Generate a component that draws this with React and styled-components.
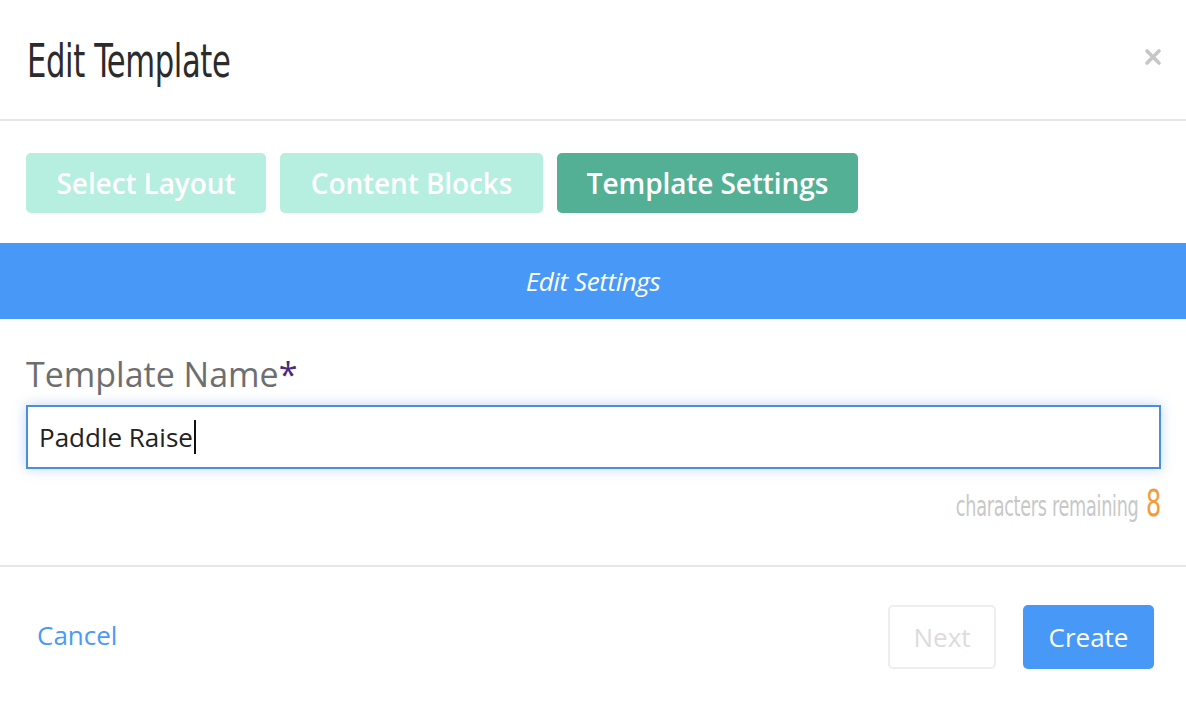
import React from 'react';
import styled, { createGlobalStyle } from 'styled-components';

const GlobalStyle = createGlobalStyle`
	body {
		margin: 0;
		background: #fff;
		font-family: "Open Sans", "Liberation Sans", sans-serif;
	}
`;

const tabs = [
	{ name: 'Select Layout', width: 240, active: false },
	{ name: 'Content Blocks', width: 263, active: false },
	{ name: 'Template Settings', width: 301, active: true },
];

const App = () => {
	return (
		<Modal>
			<GlobalStyle />
			<Header>
				<Title>Edit Template</Title>
				<Close aria-label="close">
					<svg width="18" height="18" viewBox="0 0 18 18">
						<path d="M3 3 L15 15 M15 3 L3 15" stroke="#c6c6c6" strokeWidth="3.6" strokeLinecap="round" />
					</svg>
				</Close>
			</Header>

			<Tabs>
				{tabs.map((t) => (
					<Tab key={t.name} active={t.active} style={{ width: t.width }}>
						{t.name}
					</Tab>
				))}
			</Tabs>

			<Band>Edit Settings</Band>

			<Body>
				<Label>
					Template Name<span>*</span>
				</Label>
				<InputBox>
					Paddle Raise<Caret />
				</InputBox>
				<Remaining>
					<Narrow>
						characters remaining <b>8</b>
					</Narrow>
				</Remaining>
			</Body>

			<Footer>
				<Cancel>Cancel</Cancel>
				<Actions>
					<NextButton>Next</NextButton>
					<CreateButton>Create</CreateButton>
				</Actions>
			</Footer>
		</Modal>
	);
};

const Modal = styled.div`
	width: 1186px;
	height: 706px;
	background: #fff;
	overflow: hidden;
`;

const Header = styled.div`
	height: 121px;
	border-bottom: 2px solid #e6e6e6;
	display: flex;
	align-items: center;
	justify-content: space-between;
	padding: 0 24px 0 27px;
	box-sizing: border-box;
`;

const Title = styled.h1`
	margin: 2px 0 0;
	font-family: "Liberation Sans Narrow", "DejaVu Sans Condensed", "Liberation Sans", sans-serif;
	font-weight: 400;
	font-size: 46px;
	letter-spacing: -0.5px;
	color: #2b2b2b;
	transform: scaleX(0.74);
	transform-origin: left center;
`;

const Close = styled.div`
	display: flex;
	align-items: center;
	margin-top: -6px;
`;

const Tabs = styled.div`
	display: flex;
	gap: 14px;
	padding: 32px 26px 30px;
`;

const Tab = styled.div`
	height: 60px;
	border-radius: 5px;
	background: ${({ active }) => (active ? '#54b095' : '#b6eee0')};
	color: #fff;
	font-weight: 600;
	font-size: 28px;
	display: flex;
	align-items: center;
	justify-content: center;
	box-sizing: border-box;
	letter-spacing: -0.1px;
`;

const Band = styled.div`
	height: 76px;
	background: #4899f7;
	color: #fff;
	font-style: italic;
	font-size: 26px;
	display: flex;
	align-items: center;
	justify-content: center;
	letter-spacing: -0.4px;
`;

const Body = styled.div`
	padding: 33px 25px 0 26px;
	height: 248px;
	box-sizing: border-box;
	border-bottom: 2px solid #e6e6e6;
`;

const Label = styled.div`
	font-size: 34px;
	color: #6e6e6e;
	line-height: 44px;
	margin-bottom: 9px;
	span {
		color: #4b2a7b;
	}
`;

const InputBox = styled.div`
	height: 64px;
	border: 2px solid #4a90d9;
	box-sizing: border-box;
	box-shadow: 0 0 12px rgba(74, 144, 217, 0.35);
	display: flex;
	align-items: center;
	padding-left: 11px;
	font-size: 26px;
	color: #222;
`;

const Caret = styled.span`
	display: inline-block;
	width: 2px;
	height: 34px;
	background: #111;
	margin-left: 1px;
`;

const Remaining = styled.div`
	margin-top: 12px;
	display: flex;
	justify-content: flex-end;
`;

const Narrow = styled.span`
	display: inline-block;
	font-family: "Liberation Sans Narrow", "DejaVu Sans Condensed", "Liberation Sans", sans-serif;
	font-size: 28px;
	color: #c8c8c8;
	letter-spacing: -0.4px;
	transform: scaleX(0.7);
	transform-origin: right center;
	white-space: nowrap;
	b {
		font-weight: 400;
		font-size: 38px;
		color: #f39c3c;
		margin-left: 3px;
	}
`;

const Footer = styled.div`
	display: flex;
	align-items: center;
	justify-content: space-between;
	padding: 38px 32px 0 37px;
`;

const Cancel = styled.div`
	color: #4a9af7;
	font-size: 26px;
	margin-top: -4px;
`;

const Actions = styled.div`
	display: flex;
	gap: 27px;
`;

const NextButton = styled.div`
	width: 108px;
	height: 64px;
	border: 2px solid #eeeeee;
	border-radius: 5px;
	box-sizing: border-box;
	color: #dcdcdc;
	font-size: 26px;
	display: flex;
	align-items: center;
	justify-content: center;
`;

const CreateButton = styled.div`
	width: 131px;
	height: 64px;
	border-radius: 5px;
	background: #4899f7;
	color: #fff;
	font-size: 26px;
	display: flex;
	align-items: center;
	justify-content: center;
`;

export default App;
